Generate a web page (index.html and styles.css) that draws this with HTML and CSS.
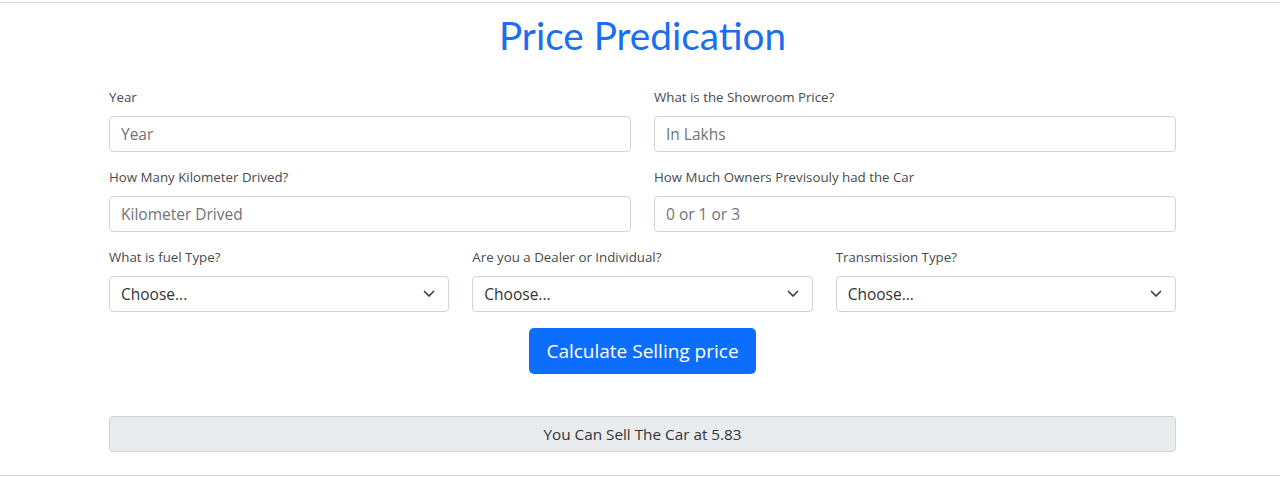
FILE: index.html
```html
<!DOCTYPE html>
<html lang="en">
<head>
<meta charset="utf-8">
<title>Price Predication</title>
<link rel="stylesheet" href="styles.css">
</head>
<body>
<div class="page">
  <h1 class="title">Price Predication</h1>
  <form class="form">
    <div class="row row-2">
      <div class="field">
        <label class="label">Year</label>
        <input class="control" type="text" placeholder="Year">
      </div>
      <div class="field">
        <label class="label">What is the Showroom Price?</label>
        <input class="control" type="text" placeholder="In Lakhs">
      </div>
    </div>
    <div class="row row-2">
      <div class="field">
        <label class="label">How Many Kilometer Drived?</label>
        <input class="control" type="text" placeholder="Kilometer Drived">
      </div>
      <div class="field">
        <label class="label">How Much Owners Previsouly had the Car</label>
        <input class="control" type="text" placeholder="0 or 1 or 3">
      </div>
    </div>
    <div class="row row-3">
      <div class="field">
        <label class="label">What is fuel Type?</label>
        <div class="select-wrap">
          <select class="control select"><option>Choose...</option></select>
          <svg class="chevron" viewBox="0 0 12 8" width="12" height="8"><path d="M1.5 1.5l4.5 4.5 4.5-4.5" fill="none" stroke="#3a3f44" stroke-width="1.7" stroke-linecap="round" stroke-linejoin="round"/></svg>
        </div>
      </div>
      <div class="field">
        <label class="label">Are you a Dealer or Individual?</label>
        <div class="select-wrap">
          <select class="control select"><option>Choose...</option></select>
          <svg class="chevron" viewBox="0 0 12 8" width="12" height="8"><path d="M1.5 1.5l4.5 4.5 4.5-4.5" fill="none" stroke="#3a3f44" stroke-width="1.7" stroke-linecap="round" stroke-linejoin="round"/></svg>
        </div>
      </div>
      <div class="field">
        <label class="label">Transmission Type?</label>
        <div class="select-wrap">
          <select class="control select"><option>Choose...</option></select>
          <svg class="chevron" viewBox="0 0 12 8" width="12" height="8"><path d="M1.5 1.5l4.5 4.5 4.5-4.5" fill="none" stroke="#3a3f44" stroke-width="1.7" stroke-linecap="round" stroke-linejoin="round"/></svg>
        </div>
      </div>
    </div>
    <div class="actions">
      <button class="btn" type="button">Calculate Selling price</button>
    </div>
    <div class="result">You Can Sell The Car at 5.83</div>
  </form>
</div>
</body>
</html>
```
FILE: styles.css
```css
* { box-sizing: border-box; }
html, body { margin: 0; padding: 0; background: #fff; }
body {
  font-family: "Open Sans", "Liberation Sans", sans-serif;
  color: #212529;
  height: 477px;
  overflow: hidden;
}
.page {
  margin-top: 2px;
  border-top: 1px solid #d4d4d4;
  border-bottom: 1px solid #d4d4d4;
  height: 474px;
}
.title {
  margin: 9px 0 0;
  text-align: center;
  font-family: "Lato", "Noto Sans", sans-serif;
  font-weight: 400;
  font-size: 38.7px;
  line-height: 46px;
  color: #1a6ff0;
  padding-left: 5px;
}
.form {
  width: 1067px;
  margin-left: 109px;
  margin-top: 29px;
}
.row {
  display: grid;
  column-gap: 23px;
  margin-bottom: 15px;
}
.row-2 { grid-template-columns: 1fr 1fr; }
.row-3 { grid-template-columns: 1fr 1fr 1fr; margin-bottom: 16px; }
.field { display: flex; flex-direction: column; }
.label {
  font-size: 13.3px;
  line-height: 20px;
  margin-bottom: 9px;
  color: #484b4e;
}
.control {
  height: 36px;
  width: 100%;
  border: 1px solid #ced4da;
  border-radius: 4px;
  padding: 0 11px;
  font-family: "Open Sans", "Liberation Sans", sans-serif;
  font-size: 15.5px;
  color: #333;
  background: #fff;
  outline: none;
}
.control::placeholder { color: #707478; }
.select-wrap { position: relative; }
.select {
  appearance: none;
  -webkit-appearance: none;
  padding-right: 36px;
}
.chevron {
  position: absolute;
  right: 14px;
  top: 14px;
  width: 12px;
  height: 8px;
  pointer-events: none;
}
.actions {
  display: flex;
  justify-content: center;
}
.btn {
  height: 46px;
  padding: 0 17px;
  border: none;
  border-radius: 5px;
  background: #0d6efd;
  color: #fff;
  font-family: "Open Sans", "Liberation Sans", sans-serif;
  font-size: 19px;
  cursor: pointer;
}
.result {
  margin-top: 42px;
  height: 36px;
  border: 1px solid #ced4da;
  border-radius: 4px;
  background: #e9ecef;
  color: #333;
  text-align: center;
  font-size: 15.3px;
  line-height: 34px;
}
```
